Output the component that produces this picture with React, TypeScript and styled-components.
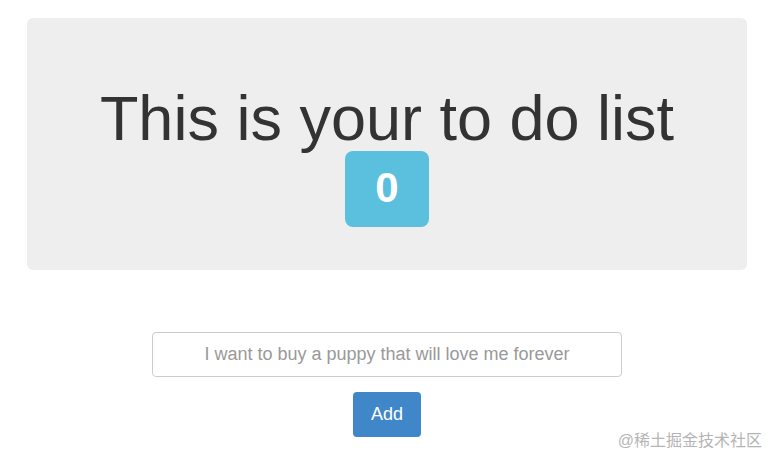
import React from "react";
import styled, { createGlobalStyle } from "styled-components";

const Global = createGlobalStyle`
  html, body { margin: 0; padding: 0; background: #fff; }
  body { font-family: "Liberation Sans", Arial, sans-serif; color: #333; }
`;

const Page = styled.div`
  position: relative;
  width: 767px;
  height: 458px;
  overflow: hidden;
`;

const Container = styled.div`
  width: 720px;
  margin-left: 27px;
  padding-top: 18px;
  display: flex;
  flex-direction: column;
  align-items: center;
`;

const Jumbotron = styled.div`
  box-sizing: border-box;
  width: 720px;
  height: 252px;
  background: #eeeeee;
  border-radius: 6px;
  padding-top: 66px;
  display: flex;
  flex-direction: column;
  align-items: center;
`;

const Title = styled.h1`
  margin: 0;
  font-family: "Liberation Sans", Arial, sans-serif;
  font-weight: 400;
  font-size: 63px;
  line-height: 69px;
  color: #333;
  white-space: nowrap;
`;

const Badge = styled.span`
  margin-top: -2px;
  width: 84px;
  height: 76px;
  border-radius: 8px;
  background: #5bc0de;
  color: #fff;
  font-weight: 700;
  font-size: 42px;
  padding-bottom: 3px;
  box-sizing: border-box;
  display: flex;
  align-items: center;
  justify-content: center;
`;

const Input = styled.input`
  box-sizing: border-box;
  margin-top: 62px;
  width: 470px;
  height: 45px;
  border: 1px solid #ccc;
  border-radius: 4px;
  background: #fff;
  font-family: "Liberation Sans", Arial, sans-serif;
  font-size: 18px;
  text-align: center;
  outline: none;
  &::placeholder { color: #999; }
`;

const Button = styled.button`
  margin-top: 15px;
  width: 68px;
  height: 45px;
  border: none;
  border-radius: 4px;
  background: #3f87c9;
  color: #fff;
  font-family: "Liberation Sans", Arial, sans-serif;
  font-size: 18px;
  cursor: pointer;
`;

const Watermark = styled.div`
  position: absolute;
  right: 5px;
  bottom: 7px;
  font-family: "Liberation Sans", "Noto Sans CJK SC", sans-serif;
  font-size: 16px;
  color: #b5b5b5;
`;

export default function App() {
  return (
    <Page>
      <Global />
      <Container>
        <Jumbotron>
          <Title>This is your to do list</Title>
          <Badge>0</Badge>
        </Jumbotron>
        <Input placeholder="I want to buy a puppy that will love me forever" />
        <Button>Add</Button>
      </Container>
      <Watermark>@稀土掘金技术社区</Watermark>
    </Page>
  );
}
